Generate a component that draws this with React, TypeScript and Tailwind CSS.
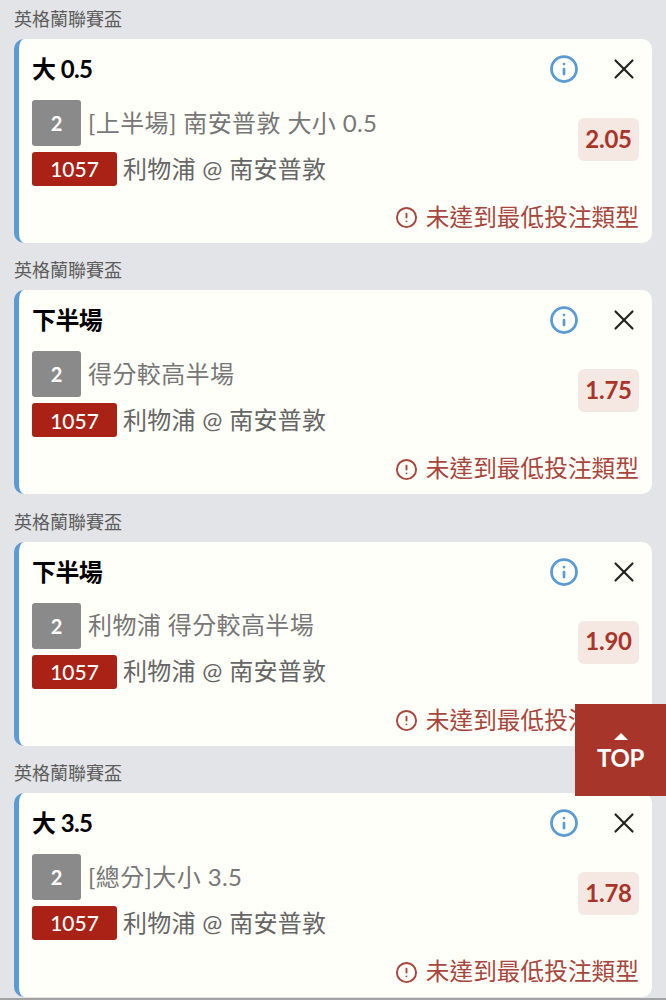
import { X, Info, CircleAlert } from "lucide-react"

const bets = [
    { title: "大 0.5", desc: "[上半場] 南安普敦 大小 0.5", odds: "2.05" },
    { title: "下半場", desc: "得分較高半場", odds: "1.75" },
    { title: "下半場", desc: "利物浦 得分較高半場", odds: "1.90" },
    { title: "大 3.5", desc: "[總分]大小 3.5", odds: "1.78" },
]

function BetCard({ title, desc, odds }: { title: string; desc: string; odds: string }) {
    return (
        <section>
            <h2 className="h-[39px] pl-[14px] flex items-center text-[18px] text-[#5c5c5c]">英格蘭聯賽盃</h2>
            <div className="mx-[14px] h-[204px] rounded-[10px] border-l-[5px] border-[#5b9bd5] bg-[#fffff9] pl-[13px] pr-[13px] flex flex-col">
                <header className="h-[61px] flex items-center justify-between">
                    <span className="text-[24px] font-bold leading-none tracking-[-0.6px] text-black mt-[-1px]">{title}</span>
                    <span className="flex items-center gap-[28px] mt-[-1px] mr-[-2px]">
                        <Info size={30} strokeWidth={2.2} className="text-[#5b9bd5]" />
                        <X size={34} strokeWidth={1.5} className="text-[#222222]" />
                    </span>
                </header>
                <div className="flex items-center justify-between">
                    <div className="flex flex-col gap-[6px]">
                        <div className="flex items-center gap-[7px]">
                            <span className="w-[49px] h-[46px] rounded-[3px] bg-[#8a8a8a] text-white text-[20px] font-bold flex items-center justify-center">2</span>
                            <span className="text-[24px] leading-none tracking-[0.4px] mt-[-1px] text-[#777777]">{desc}</span>
                        </div>
                        <div className="flex items-center gap-[6px]">
                            <span className="w-[85px] h-[34px] rounded-[3px] bg-[#aa2116] text-white text-[21px] font-medium flex items-center justify-center">1057</span>
                            <span className="text-[24px] leading-none tracking-[0.3px] mt-[-1px] text-[#666666]">利物浦 @ 南安普敦</span>
                        </div>
                    </div>
                    <span className="w-[61px] h-[43px] rounded-[6px] bg-[#f5e8e2] text-[#a8352a] text-[24px] font-bold tracking-[-0.3px] flex items-center justify-center mt-[-7px] pb-[2px]">{odds}</span>
                </div>
                <footer className="mt-[20px] flex items-center justify-end gap-[8px] text-[#a8453d]">
                    <CircleAlert size={23} strokeWidth={2} />
                    <span className="text-[23.7px] leading-none">未達到最低投注類型</span>
                </footer>
            </div>
        </section>
    )
}

export default function App() {
    return (
        <main className="relative w-[666px] h-[1000px] overflow-hidden bg-[#e2e4e7] font-['Lato','Noto_Sans_CJK_TC',sans-serif]">
            <div className="flex flex-col gap-[8.4px]">
                {bets.map((b) => (
                    <BetCard key={b.desc} {...b} />
                ))}
            </div>
            <button className="absolute left-[575px] top-[704px] w-[91px] h-[92px] bg-[#a8352a] text-white flex flex-col items-center justify-center">
                <span className="mt-[2px] w-0 h-0 border-x-[7px] border-x-transparent border-b-[7px] border-b-white" />
                <span className="text-[24px] font-bold leading-none mt-[6px] tracking-[-0.3px]">TOP</span>
            </button>
            <div className="absolute left-0 right-0 bottom-0 h-[2px] bg-[#a3a3a6]" />
        </main>
    )
}
